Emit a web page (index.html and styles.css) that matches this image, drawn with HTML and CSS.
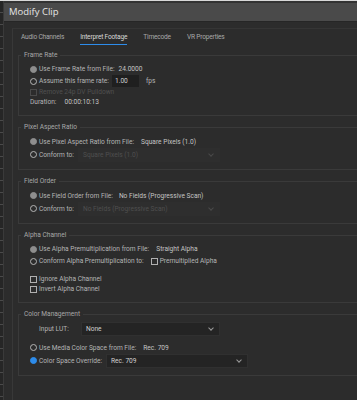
FILE: index.html
```html
<!DOCTYPE html>
<html lang="en">
<head>
    <meta charset="UTF-8">
    <meta name="viewport" content="width=device-width, initial-scale=1.0">
    <title>Modify Clip</title>
    <link rel="stylesheet" href="styles.css">
</head>
<body>
    <div class="topline"></div>
    <div class="window">
        <div class="gutter"></div>
        <div class="main">
            <div class="titlebar">Modify Clip</div>
            <div class="content">
                <div class="tabs">
                    <span class="tab">Audio Channels</span>
                    <span class="tab active">Interpret Footage</span>
                    <span class="tab">Timecode</span>
                    <span class="tab">VR Properties</span>
                </div>

                <fieldset class="group">
                    <legend>Frame Rate</legend>
                    <div class="row">
                        <span class="radio filled"></span>
                        <span class="label">Use Frame Rate from File:</span>
                        <span class="value fr-value">24.0000</span>
                    </div>
                    <div class="row">
                        <span class="radio"></span>
                        <span class="label">Assume this frame rate:</span>
                        <span class="field">1.00</span>
                        <span class="unit">fps</span>
                    </div>
                    <div class="row short">
                        <span class="check disabled"></span>
                        <span class="label muted">Remove 24p DV Pulldown</span>
                    </div>
                    <div class="row short">
                        <span class="plain">Duration:</span>
                        <span class="value dur-value">00:00:10:13</span>
                    </div>
                </fieldset>

                <fieldset class="group">
                    <legend>Pixel Aspect Ratio</legend>
                    <div class="row drop-row">
                        <span class="radio filled"></span>
                        <span class="label">Use Pixel Aspect Ratio from File:</span>
                        <span class="value par-value">Square Pixels (1.0)</span>
                    </div>
                    <div class="row drop-row">
                        <span class="radio"></span>
                        <span class="label conform">Conform to:</span>
                        <span class="select disabled">Square Pixels (1.0)<span class="caret"></span></span>
                    </div>
                </fieldset>

                <fieldset class="group">
                    <legend>Field Order</legend>
                    <div class="row drop-row">
                        <span class="radio filled"></span>
                        <span class="label">Use Field Order from File:</span>
                        <span class="value fo-value">No Fields (Progressive Scan)</span>
                    </div>
                    <div class="row drop-row">
                        <span class="radio"></span>
                        <span class="label conform">Conform to:</span>
                        <span class="select disabled">No Fields (Progressive Scan)<span class="caret"></span></span>
                    </div>
                </fieldset>

                <fieldset class="group">
                    <legend>Alpha Channel</legend>
                    <div class="row">
                        <span class="radio filled"></span>
                        <span class="label">Use Alpha Premultiplication from File:</span>
                        <span class="value alpha-value">Straight Alpha</span>
                    </div>
                    <div class="row">
                        <span class="radio"></span>
                        <span class="label">Conform Alpha Premultiplication to:</span>
                        <span class="check inline"></span>
                        <span class="label">Premultiplied Alpha</span>
                    </div>
                    <div class="row short spaced">
                        <span class="check"></span>
                        <span class="label">Ignore Alpha Channel</span>
                    </div>
                    <div class="row short">
                        <span class="check"></span>
                        <span class="label">Invert Alpha Channel</span>
                    </div>
                </fieldset>

                <fieldset class="group">
                    <legend>Color Management</legend>
                    <div class="row drop-row">
                        <span class="plain lut">Input LUT:</span>
                        <span class="select lut-select">None<span class="caret"></span></span>
                    </div>
                    <div class="row drop-row spaced-lg">
                        <span class="radio"></span>
                        <span class="label">Use Media Color Space from File:</span>
                        <span class="value cs-value">Rec. 709</span>
                    </div>
                    <div class="row drop-row">
                        <span class="radio blue"></span>
                        <span class="label override-label">Color Space Override:</span>
                        <span class="select">Rec. 709<span class="caret"></span></span>
                    </div>
                </fieldset>
            </div>
        </div>
    </div>
</body>
</html>
```

FILE: styles.css
```css
body {
    margin: 0;
    background-color: #2c2c2c;
    font-family: Roboto, "Noto Sans", sans-serif;
    font-size: 6.6px;
    color: #b5b5b5;
    height: 400px;
    overflow: hidden;
}
.topline {
    height: 1px;
    background-color: #d8d8d8;
}
.window {
    display: flex;
    height: 399px;
}
.gutter {
    width: 3px;
    flex: none;
    background-color: #262626;
    border-right: 1px solid #3a3a3a;
    background-image: repeating-linear-gradient(to bottom, transparent 0, transparent 11px, #4a4a4a 11px, #4a4a4a 12px);
}
.main {
    flex: 1;
    display: flex;
    flex-direction: column;
    border-top: 2px solid #333;
}
.titlebar {
    height: 18px;
    line-height: 18px;
    background-color: #4a4a4a;
    border-bottom: 1px solid #262626;
    color: #e6e6e6;
    font-family: "Open Sans", sans-serif;
    font-size: 9.5px;
    padding-left: 5px;
}
.content {
    flex: 1;
    margin-top: 6px;
    margin-left: 8px;
    border-left: 1px solid #383838;
    border-top: 1px solid #353535;
}
.tabs {
    display: flex;
    gap: 16px;
    padding: 3px 0 0 8px;
    height: 13px;
    margin-bottom: 5px;
    letter-spacing: -0.2px;
}
.tab {
    color: #a8a8a8;
    line-height: 11px;
}
.tab.active {
    color: #d8d8d8;
    border-bottom: 1.5px solid #2d8ceb;
}
.group {
    border: 1px solid #3a3a3a;
    border-right: none;
    margin: 0 0 6px 5px;
    padding: 3px 0 8px 11px;
}
.group legend {
    padding: 0 3px;
    margin-left: -9px;
    color: #a8a8a8;
    line-height: 10px;
}
.row {
    display: flex;
    align-items: center;
    height: 12px;
    white-space: nowrap;
}
.row.short {
    height: 10px;
}
.row.drop-row {
    height: 13px;
}
.row.spaced {
    margin-top: 7px;
}
.row.spaced-lg {
    margin-top: 6px;
}
.radio {
    width: 5px;
    height: 5px;
    border: 1px solid #b5b5b5;
    border-radius: 50%;
    margin-right: 2px;
    flex: none;
}
.radio.filled {
    background-color: #8e8e8e;
    border-color: #8e8e8e;
}
.radio.blue {
    background-color: #2d8ceb;
    border-color: #2d8ceb;
}
.check {
    width: 5px;
    height: 5px;
    border: 1px solid #b0b0b0;
    margin-right: 2px;
    flex: none;
}
.check.disabled {
    border-color: #4a4a4a;
}
.check.inline {
    margin-left: 7px;
}
.muted {
    color: #505050;
}
.lut {
    margin-left: 9px;
    width: 42px;
}
.value {
    color: #c4c4c4;
}
.fr-value { margin-left: 4px; }
.dur-value { margin-left: 8px; }
.par-value { margin-left: 7px; }
.fo-value { margin-left: 6px; }
.alpha-value { margin-left: 7px; }
.cs-value { margin-left: 7px; }
.field {
    background-color: #1f1f1f;
    color: #d0d0d0;
    width: 24px;
    height: 12px;
    line-height: 12px;
    padding-left: 3px;
    margin-left: 3px;
}
.unit {
    margin-left: 7px;
}
.conform {
    width: 39px;
}
.override-label {
    width: 67px;
}
.select {
    position: relative;
    background-color: #242424;
    border: 1px solid #303030;
    color: #d0d0d0;
    width: 136px;
    height: 12px;
    line-height: 12px;
    padding-left: 4px;
}
.lut-select {
    width: 133px;
}
.select.disabled {
    color: #4e4e4e;
    background-color: #2e2e2e;
    border-color: #2e2e2e;
}
.caret {
    position: absolute;
    right: 6px;
    top: 3px;
    width: 3px;
    height: 3px;
    border-right: 1px solid #9a9a9a;
    border-bottom: 1px solid #9a9a9a;
    transform: rotate(45deg);
}
.select.disabled .caret {
    border-color: #4a4a4a;
}
```
